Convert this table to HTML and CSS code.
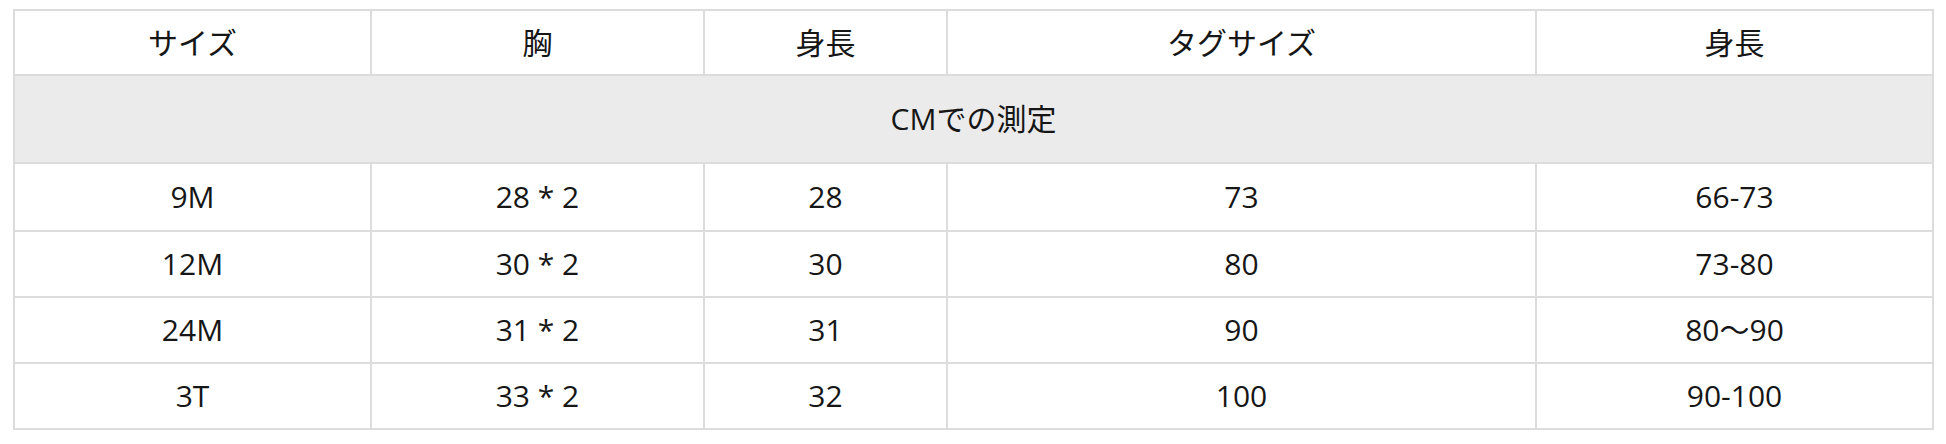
FILE: index.html
```html
<!DOCTYPE html>
<html lang="ja">
<head>
<meta charset="utf-8">
<link rel="stylesheet" href="styles.css">
</head>
<body>
<table class="size-table">
  <colgroup>
    <col class="c1"><col class="c2"><col class="c3"><col class="c4"><col class="c5">
  </colgroup>
  <tr class="head-row">
    <td>サイズ</td><td>胸</td><td>身長</td><td>タグサイズ</td><td>身長</td>
  </tr>
  <tr class="unit-row">
    <td colspan="5">CMでの測定</td>
  </tr>
  <tr class="data-row first">
    <td>9M</td><td>28 * 2</td><td>28</td><td>73</td><td>66-73</td>
  </tr>
  <tr class="data-row">
    <td>12M</td><td>30 * 2</td><td>30</td><td>80</td><td>73-80</td>
  </tr>
  <tr class="data-row">
    <td>24M</td><td>31 * 2</td><td>31</td><td>90</td><td>80～90</td>
  </tr>
  <tr class="data-row">
    <td>3T</td><td>33 * 2</td><td>32</td><td>100</td><td>90-100</td>
  </tr>
</table>
</body>
</html>
```
FILE: styles.css
```css
html, body {
  margin: 0;
  padding: 0;
  background: #ffffff;
}
body {
  padding: 9px 13px;
  font-family: "Open Sans", "Noto Sans CJK JP", sans-serif;
  color: #161616;
}
.size-table {
  border-collapse: collapse;
  table-layout: fixed;
  width: 1919px;
  font-size: 30px;
}
.c1 { width: 357px; }
.c2 { width: 333px; }
.c3 { width: 243px; }
.c4 { width: 589px; }
.c5 { width: 397px; }
.size-table td {
  border: 2px solid #dcdcdc;
  text-align: center;
  vertical-align: middle;
  padding: 0;
  line-height: 1.2;
}
.head-row { height: 65px; }
.unit-row { height: 88px; }
.unit-row td { background: #ebebeb; }
.data-row { height: 66px; }
.data-row.first { height: 68px; }
```
